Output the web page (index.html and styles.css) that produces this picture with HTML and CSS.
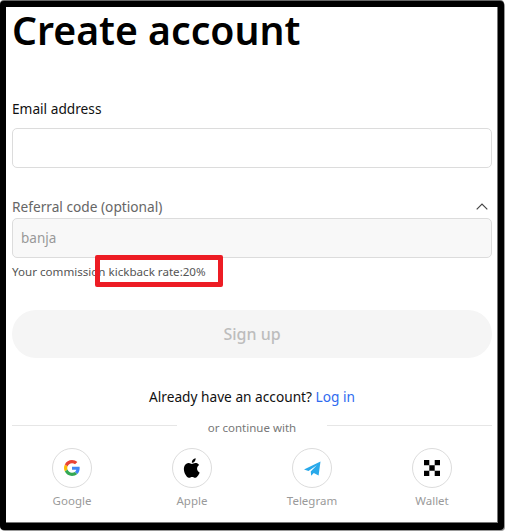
FILE: index.html
```html
<!DOCTYPE html>
<html lang="en">
<head>
  <meta charset="UTF-8" />
  <title>Create account</title>
  <link rel="stylesheet" href="styles.css">
</head>
<body>
  <div class="frame">
    <h1>Create account</h1>

    <label class="field-label" for="email">Email address</label>
    <input class="text-input" type="text" id="email" />

    <div class="referral-head">
      <label class="referral-label" for="referral">Referral code (optional)</label>
      <svg class="chevron" width="12" height="7" viewBox="0 0 12 7"><path d="M0.700 6.300L6 1L11.300 6.300" fill="none" stroke="#444" stroke-width="1.200"/></svg>
    </div>
    <input class="text-input locked" type="text" id="referral" value="banja" disabled />
    <div class="hint-wrap">
      <p class="hint">Your commission kickback rate:20%</p>
      <span class="marker"></span>
    </div>

    <button class="signup" type="button" disabled>Sign up</button>

    <p class="login-line">Already have an account? <a href="#">Log in</a></p>

    <div class="divider"><span>or continue with</span></div>

    <div class="socials">
      <div class="social">
        <span class="circle">
          <svg width="16" height="16" viewBox="0 0 48 48">
            <path fill="#EA4335" d="M24 9.500c3.500 0 6.700 1.200 9.200 3.600l6.900-6.900C35.900 2.400 30.500 0 24 0 14.600 0 6.500 5.400 2.600 13.200l8 6.200C12.500 13.700 17.800 9.500 24 9.500z"/>
            <path fill="#4285F4" d="M47 24.500c0-1.600-.1-3.100-.4-4.500H24v9h12.900c-.6 3-2.200 5.500-4.700 7.200l7.700 6C44.400 38 47 31.800 47 24.500z"/>
            <path fill="#FBBC05" d="M10.600 28.600c-.5-1.400-.8-3-.8-4.600s.3-3.200.8-4.600l-8-6.200C.9 16.500 0 20.100 0 24s.9 7.500 2.600 10.800l8-6.200z"/>
            <path fill="#34A853" d="M24 48c6.500 0 11.900-2.100 15.900-5.800l-7.700-6c-2.100 1.400-4.900 2.300-8.200 2.300-6.200 0-11.500-4.200-13.400-9.900l-8 6.200C6.500 42.600 14.600 48 24 48z"/>
          </svg>
        </span>
        <span class="social-name">Google</span>
      </div>
      <div class="social">
        <span class="circle">
          <svg width="24" height="24" viewBox="0 0 24 24"><path fill="#000" d="M17.050 12.600c0-2.400 2-3.600 2.100-3.650-1.150-1.650-2.900-1.900-3.550-1.900-1.500-.15-2.950.9-3.700.9-.8 0-1.950-.9-3.200-.85-1.650 0-3.150.95-4 2.400-1.700 3-.45 7.350 1.200 9.750.8 1.200 1.800 2.500 3.050 2.450 1.200-.05 1.700-.8 3.200-.8s1.900.8 3.200.75c1.350 0 2.150-1.200 2.950-2.350.95-1.350 1.300-2.700 1.350-2.750-.05 0-2.550-1-2.600-3.950zM14.650 5.400c.65-.8 1.100-1.950 1-3.050-.95.050-2.100.65-2.800 1.450-.6.700-1.150 1.850-1 2.950 1.050.1 2.150-.55 2.800-1.350z"/></svg>
        </span>
        <span class="social-name">Apple</span>
      </div>
      <div class="social">
        <span class="circle">
          <svg width="17" height="15" viewBox="0 0 17 15"><path fill="#29A9EA" d="M0 8.400L16.500 0.500L14.600 14.500L9.800 12L7.200 14.800L6.700 10.400L12.800 4.300L4.500 9.900z"/></svg>
        </span>
        <span class="social-name">Telegram</span>
      </div>
      <div class="social">
        <span class="circle">
          <svg width="16" height="16" viewBox="0 0 16 16"><path fill="#000" d="M0 0h5.300v5.300H0zM10.700 0H16v5.300h-5.300zM5.300 5.300h5.400v5.400H5.300zM0 10.700h5.300V16H0zM10.700 10.700H16V16h-5.300z"/></svg>
        </span>
        <span class="social-name">Wallet</span>
      </div>
    </div>
  </div>
</body>
</html>
```

FILE: styles.css
```css
* {
  box-sizing: border-box;
}
html, body {
  margin: 0;
  padding: 0;
  background: #fff;
}
body {
  width: 505px;
  height: 531px;
  overflow: hidden;
  font-family: "Noto Sans", Arial, sans-serif;
  color: #111;
}
.frame {
  width: 504px;
  height: 529px;
  margin-top: 1px;
  border: solid #000;
  border-width: 6px 6px 7px 6px;
  border-radius: 4px;
  padding: 0 6px;
  background: #fff;
  box-shadow: inset -1px -1px 0 #777, 0 -1px 0 #666, 1px 1px 0 #999;
}
h1 {
  margin: 0;
  font-size: 39.2px;
  line-height: 46px;
  font-weight: 600;
  color: #000;
}
.field-label {
  display: block;
  margin-top: 46px;
  font-size: 13.7px;
  line-height: 20px;
  color: #111;
}
.text-input {
  display: block;
  width: 100%;
  height: 40px;
  margin-top: 9px;
  padding: 0 8px;
  border: 1px solid #dcdcdc;
  border-radius: 5px;
  background: #fff;
  font-family: inherit;
  font-size: 13.500px;
}
.locked {
  margin-top: 0;
  background: #f8f8f8;
  color: #999;
}
.referral-head {
  display: flex;
  justify-content: space-between;
  align-items: center;
  margin-top: 27px;
  margin-bottom: 1px;
  padding-right: 4px;
  height: 22px;
}
.referral-label {
  font-size: 13.7px;
  color: #666;
}
.hint-wrap {
  position: relative;
  margin-top: 4px;
}
.hint {
  margin: 0;
  font-size: 11.6px;
  line-height: 20px;
  color: #555;
}
.marker {
  position: absolute;
  left: 83px;
  top: -7px;
  width: 128px;
  height: 32px;
  border: 5px solid #ed1c24;
  border-radius: 2px;
}
.signup {
  display: block;
  width: 100%;
  height: 48px;
  margin-top: 28px;
  border: none;
  border-radius: 24px;
  background: #f5f5f5;
  color: #bdbdbd;
  font-family: inherit;
  font-size: 16px;
  font-weight: 500;
}
.login-line {
  margin: 29px 0 0;
  text-align: center;
  font-size: 13.7px;
  line-height: 20px;
  color: #111;
}
.login-line a {
  color: #2f6bf0;
  text-decoration: none;
}
.divider {
  display: flex;
  align-items: center;
  margin-top: 10px;
  height: 20px;
  font-size: 11.500px;
  color: #777;
}
.divider::before,
.divider::after {
  content: "";
  flex: 1;
  height: 1px;
  margin-top: -3px;
  background: #e6e6e6;
}
.divider span {
  padding: 0 31px;
}
.socials {
  display: grid;
  grid-template-columns: repeat(4, 120px);
  margin-top: 11px;
}
.social {
  display: flex;
  flex-direction: column;
  align-items: center;
}
.circle {
  display: flex;
  align-items: center;
  justify-content: center;
  width: 40px;
  height: 40px;
  border: 1px solid #dcdcdc;
  border-radius: 50%;
}
.social-name {
  margin-top: 4px;
  font-size: 11.500px;
  line-height: 18px;
  color: #9a9a9a;
}
```
